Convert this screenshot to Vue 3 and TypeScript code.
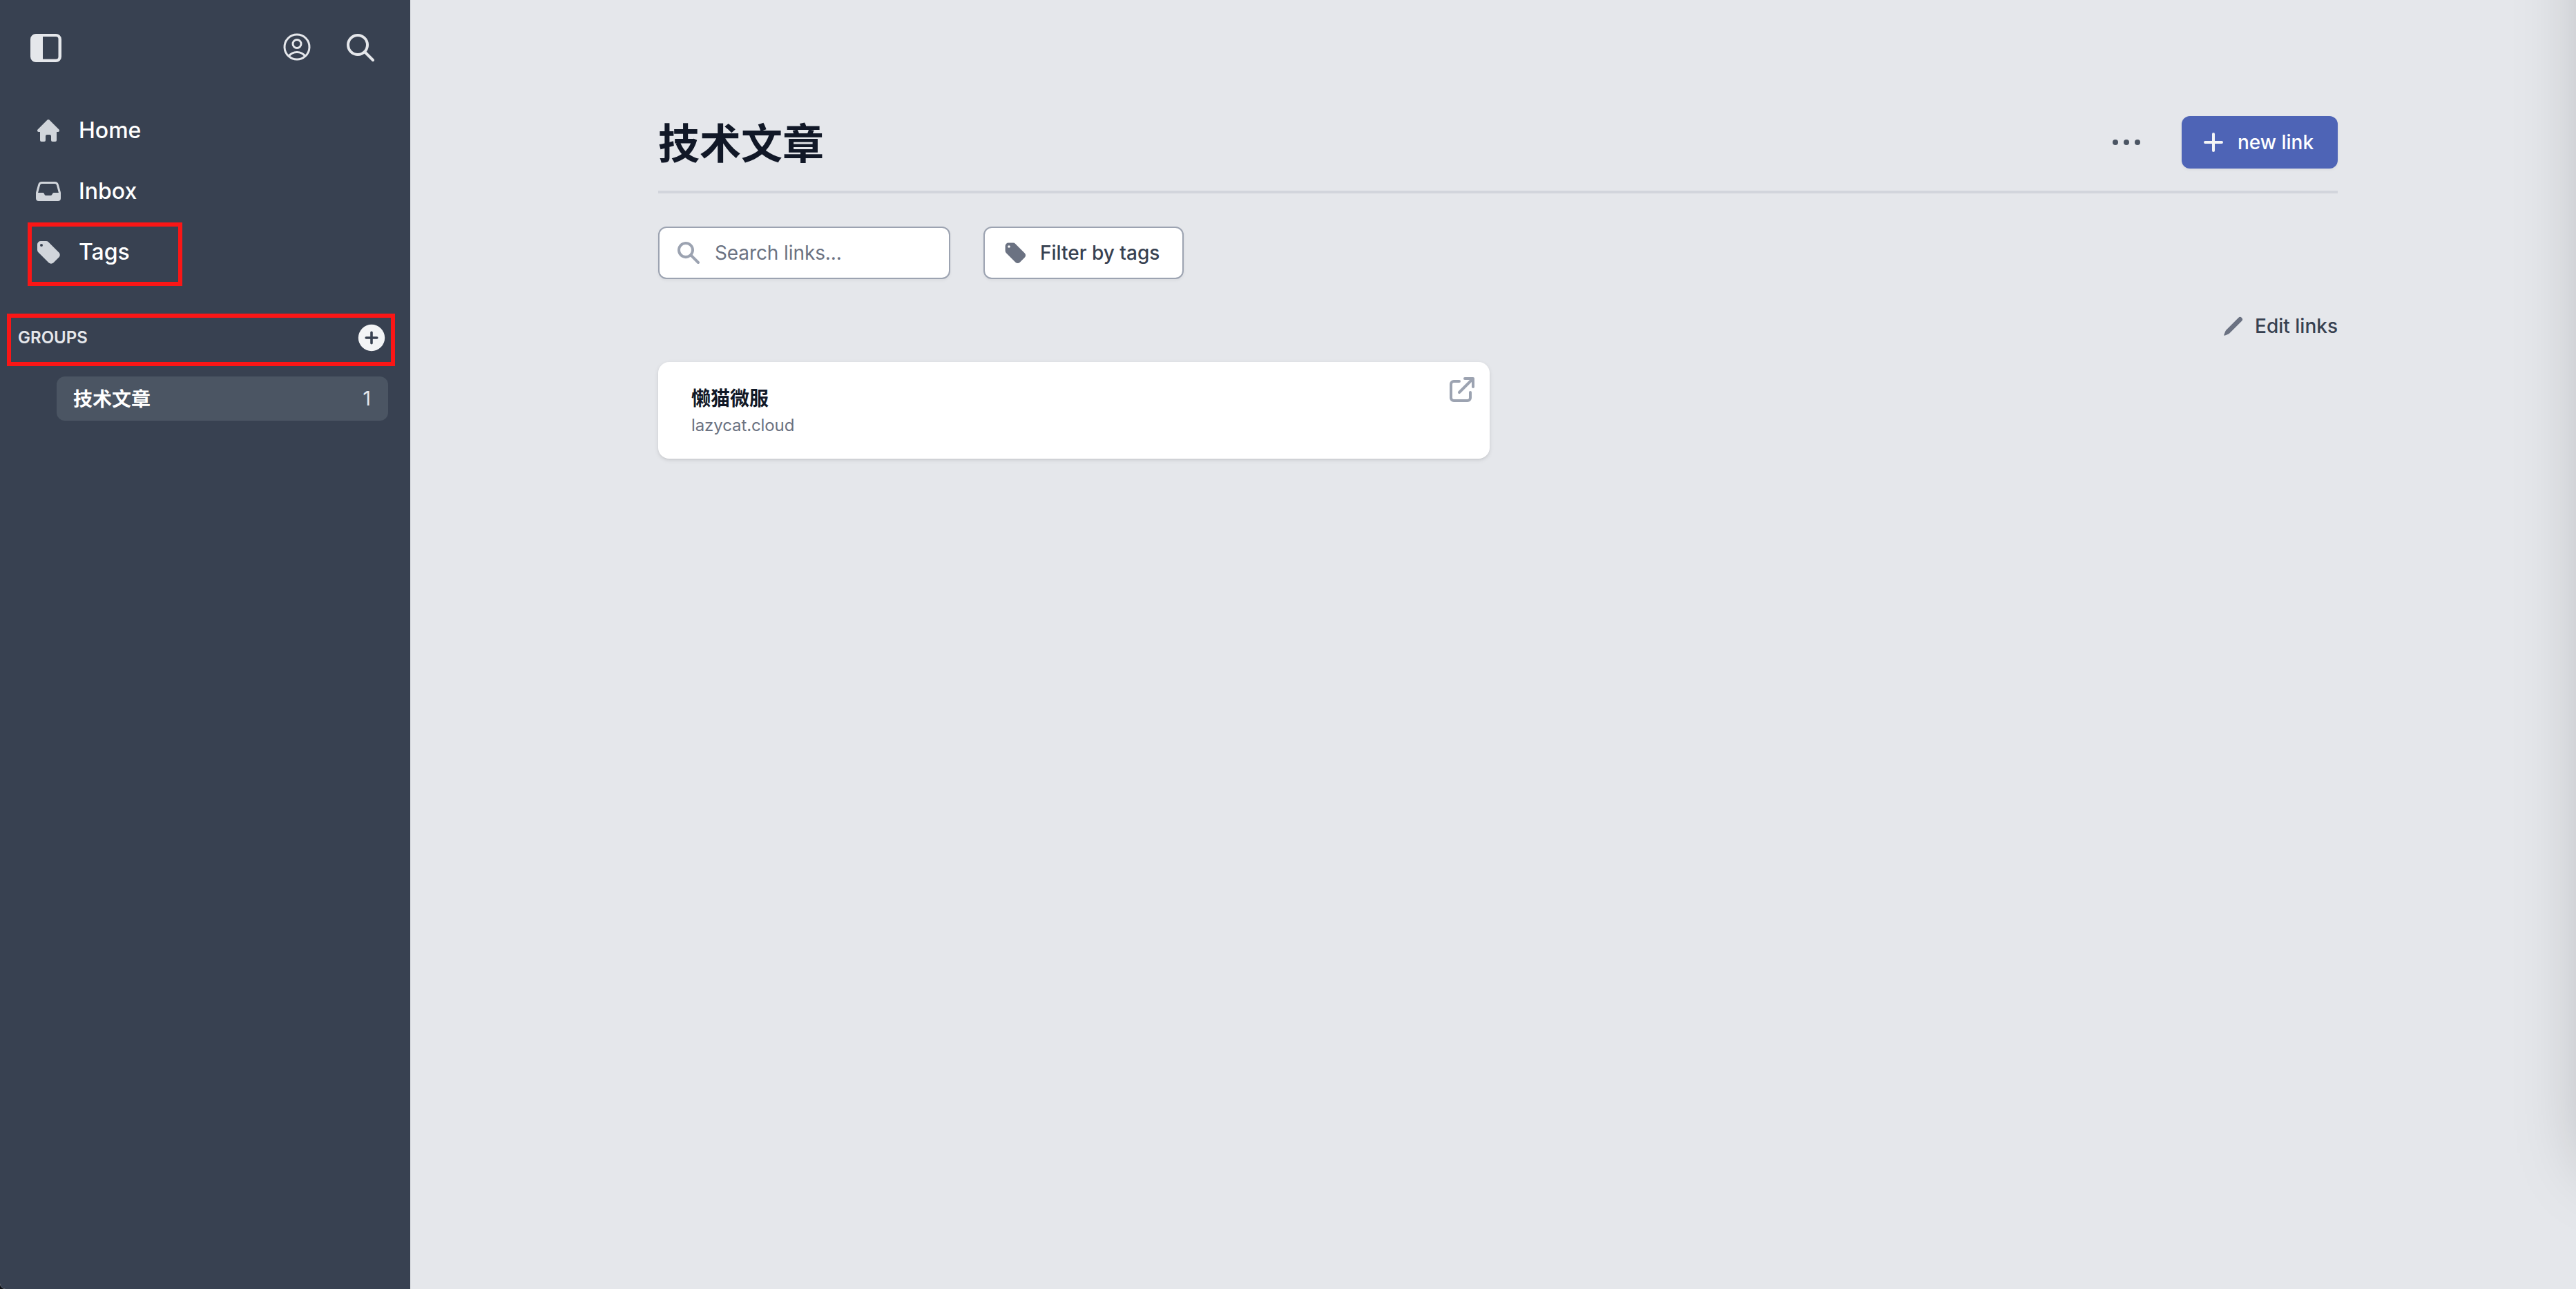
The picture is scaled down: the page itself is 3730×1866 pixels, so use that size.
<script setup lang="ts">
interface NavItem {
  label: string
  path: string
}

interface Group {
  name: string
  count: number
}

interface LinkItem {
  title: string
  host: string
}

const tagPath =
  'M4.5 2A2.5 2.5 0 002 4.5v3.879a2.5 2.5 0 00.732 1.767l7.5 7.5a2.5 2.5 0 003.536 0l3.878-3.878a2.5 2.5 0 000-3.536l-7.5-7.5A2.5 2.5 0 008.38 2H4.5zM5 6a1 1 0 100-2 1 1 0 000 2z'

const navItems: NavItem[] = [
  {
    label: 'Home',
    path: 'M9.293 2.293a1 1 0 011.414 0l7 7A1 1 0 0117 11h-1v6a1 1 0 01-1 1h-2a1 1 0 01-1-1v-3a1 1 0 00-1-1H9a1 1 0 00-1 1v3a1 1 0 01-1 1H5a1 1 0 01-1-1v-6H3a1 1 0 01-.707-1.707l7-7z',
  },
  {
    label: 'Inbox',
    path: 'M1 11.27c0-.246.033-.492.099-.73l1.523-5.521A2.75 2.75 0 015.273 3h9.454a2.75 2.75 0 012.651 2.019l1.523 5.52c.066.239.099.485.099.732V15a2 2 0 01-2 2H3a2 2 0 01-2-2v-3.73zm3.068-5.852A1.25 1.25 0 015.273 4.5h9.454a1.25 1.25 0 011.205.918l1.523 5.52c.006.02.01.041.015.062H14a1 1 0 00-.86.49l-.606 1.02a1 1 0 01-.86.49H8.236a1 1 0 01-.894-.553l-.448-.894A1 1 0 006 11H2.53l.015-.062 1.523-5.52z',
  },
  { label: 'Tags', path: tagPath },
]

const groups: Group[] = [{ name: '技术文章', count: 1 }]

const links: LinkItem[] = [{ title: '懒猫微服', host: 'lazycat.cloud' }]
</script>

<template>
  <div class="app">
    <aside class="sidebar">
      <header class="side-head">
        <svg class="toggle" viewBox="0 0 45 41">
          <path
            fill="currentColor"
            fill-rule="evenodd"
            d="M8 0H37a8 8 0 018 8V33a8 8 0 01-8 8H8a8 8 0 01-8-8V8a8 8 0 018-8zM18 4V36.500H37a3.500 3.500 0 003.500-3.500V7.500a3.500 3.500 0 00-3.500-3.500z"
          />
        </svg>
        <div class="side-actions">
          <svg class="icon-48 line thin" viewBox="0 0 24 24">
            <path
              d="M17.982 18.725A7.488 7.488 0 0012 15.75a7.488 7.488 0 00-5.982 2.975m11.963 0a9 9 0 10-11.963 0m11.963 0A8.966 8.966 0 0112 21a8.966 8.966 0 01-5.982-2.275M15 9.75a3 3 0 11-6 0 3 3 0 016 0z"
            />
          </svg>
          <svg class="icon-48 line" viewBox="0 0 24 24">
            <path d="M21 21l-6-6m2-5a7 7 0 11-14 0 7 7 0 0114 0z" />
          </svg>
        </div>
      </header>

      <nav class="nav">
        <a v-for="item in navItems" :key="item.label" class="nav-item">
          <svg class="icon-40 solid" viewBox="0 0 20 20"><path :d="item.path" /></svg>
          <span>{{ item.label }}</span>
        </a>
      </nav>

      <div class="groups-head">
        <span>GROUPS</span>
        <svg class="icon-48 solid" viewBox="0 0 20 20">
          <path
            d="M10 18a8 8 0 100-16 8 8 0 000 16zm.75-11.25a.75.75 0 00-1.5 0v2.5h-2.5a.75.75 0 000 1.5h2.5v2.5a.75.75 0 001.5 0v-2.5h2.5a.75.75 0 000-1.5h-2.500v-2.5z"
          />
        </svg>
      </div>
      <ul class="groups">
        <li v-for="group in groups" :key="group.name" class="group">
          <span class="group-name">{{ group.name }}</span>
          <span class="group-count">{{ group.count }}</span>
        </li>
      </ul>

      <div class="mark mark-tags"></div>
      <div class="mark mark-groups"></div>
    </aside>

    <main class="main">
      <header class="page-head">
        <h1>技术文章</h1>
        <div class="page-actions">
          <svg class="dots" viewBox="0 0 40 8">
            <circle cx="4" cy="4" r="4" />
            <circle cx="20" cy="4" r="4" />
            <circle cx="36" cy="4" r="4" />
          </svg>
          <button class="primary">
            <svg class="icon-40 solid" viewBox="0 0 20 20">
              <path
                d="M10 3a1 1 0 011 1v5h5a1 1 0 110 2h-5v5a1 1 0 11-2 0v-5H4a1 1 0 110-2h5V4a1 1 0 011-1z"
              />
            </svg>
            <span>new link</span>
          </button>
        </div>
      </header>

      <div class="toolbar">
        <label class="search">
          <svg class="icon-40 solid" viewBox="0 0 20 20">
            <path
              d="M8 4a4 4 0 100 8 4 4 0 000-8zM2 8a6 6 0 1110.89 3.476l4.817 4.817a1 1 0 01-1.414 1.414l-4.816-4.816A6 6 0 012 8z"
            />
          </svg>
          <span>Search links...</span>
        </label>
        <button class="filter">
          <svg class="icon-36 solid" viewBox="0 0 20 20"><path :d="tagPath" /></svg>
          <span>Filter by tags</span>
        </button>
      </div>

      <div class="edit-row">
        <svg class="icon-32 solid" viewBox="0 0 20 20">
          <path
            d="M2.695 14.763l-1.262 3.154a.5.5 0 00.65.65l3.155-1.262a4 4 0 001.343-.885L17.5 5.5a2.121 2.121 0 00-3-3L3.58 13.42a4 4 0 00-.885 1.343z"
          />
        </svg>
        <span>Edit links</span>
      </div>

      <section class="cards">
        <article v-for="link in links" :key="link.host" class="card">
          <div class="card-body">
            <h2>{{ link.title }}</h2>
            <p>{{ link.host }}</p>
          </div>
          <svg class="icon-48 line open" viewBox="0 0 24 24">
            <path
              d="M10 6H6a2 2 0 00-2 2v10a2 2 0 002 2h10a2 2 0 002-2v-4M14 4h6m0 0v6m0-6L10 14"
            />
          </svg>
        </article>
      </section>
    </main>

    <div class="drawer"></div>
  </div>
</template>

<style>
body {
  margin: 0;
  background: #0b0d12;
}
</style>

<style scoped>
.app {
  position: relative;
  display: flex;
  width: 3730px;
  height: 1866px;
  overflow: hidden;
  box-sizing: border-box;
  border-bottom-left-radius: 8px;
  background: #e5e7eb;
  font-family: Inter, 'Noto Sans CJK SC', sans-serif;
  color: #111827;
}
.app *,
.app *::before {
  box-sizing: border-box;
}
svg {
  display: block;
  flex: none;
}
.icon-48 { width: 48px; height: 48px; }
.icon-40 { width: 40px; height: 40px; }
.icon-36 { width: 36px; height: 36px; }
.icon-32 { width: 32px; height: 32px; }
.solid {
  fill: currentColor;
  fill-rule: evenodd;
}
.line {
  fill: none;
  stroke: currentColor;
  stroke-width: 2;
  stroke-linecap: round;
  stroke-linejoin: round;
}
.thin {
  stroke-width: 1.5;
}

.sidebar {
  position: relative;
  flex: none;
  width: 594px;
  background: #384151;
  color: #fff;
}
.side-head {
  display: flex;
  align-items: flex-start;
  justify-content: space-between;
  height: 145px;
  padding: 44px 48px 0 44px;
  color: #e5e7eb;
}
.toggle {
  width: 45px;
  height: 41px;
  margin-top: 5px;
}
.side-actions {
  display: flex;
  gap: 44px;
}
.side-actions svg:last-child {
  margin-top: 1px;
}
.nav-item {
  display: flex;
  align-items: center;
  gap: 24px;
  height: 88px;
  padding-left: 50px;
  font-size: 32px;
  font-weight: 500;
  line-height: 48px;
}
.nav-item svg {
  color: #d1d5db;
}
.groups-head {
  display: flex;
  align-items: center;
  justify-content: space-between;
  height: 48px;
  margin-top: 56px;
  padding: 0 32px 0 26px;
  font-size: 24px;
  font-weight: 600;
  line-height: 32px;
  color: #e5e7eb;
}
.groups-head svg {
  color: #f3f4f6;
}
.groups {
  margin: 32px 32px 0 82px;
  padding: 0;
  list-style: none;
}
.group {
  display: flex;
  align-items: center;
  justify-content: space-between;
  height: 64px;
  padding: 0 25px 0 24px;
  border-radius: 12px;
  background: #4b5563;
  font-size: 28px;
  line-height: 40px;
}
.group-name {
  padding-top: 2px;
  font-weight: 600;
}
.group-count {
  color: #e5e7eb;
}
.mark {
  position: absolute;
  border: 6px solid #fa1616;
}
.mark-tags {
  left: 40px;
  top: 322px;
  width: 224px;
  height: 92px;
}
.mark-groups {
  left: 10px;
  top: 454px;
  width: 562px;
  height: 76px;
}

.main {
  flex: 1;
  padding: 168px 345px 0 359px;
}
.page-head {
  display: flex;
  align-items: center;
  justify-content: space-between;
  height: 112px;
  padding-bottom: 32px;
  border-bottom: 4px solid #d2d5dc;
}
h1 {
  margin: 0;
  padding-top: 3px;
  font-size: 60px;
  font-weight: 700;
  line-height: 76px;
}
.page-actions {
  display: flex;
  align-items: center;
  gap: 60px;
}
.dots {
  width: 40px;
  height: 8px;
  fill: #4b5563;
}
button {
  display: flex;
  align-items: center;
  margin: 0;
  font-family: inherit;
  font-size: 28px;
  font-weight: 500;
  line-height: 40px;
  white-space: nowrap;
}
.primary {
  width: 226px;
  height: 76px;
  padding: 0 0 0 26px;
  gap: 15px;
  border: 0;
  border-radius: 12px;
  background: #4e64b6;
  color: #fff;
  font-weight: 550;
  box-shadow: 0 2px 4px rgba(0, 0, 0, 0.05);
}
.primary svg {
  color: #f3f4f6;
}
.toolbar {
  display: flex;
  gap: 48px;
  margin-top: 48px;
}
.search,
.filter {
  display: flex;
  align-items: center;
  height: 76px;
  border: 2px solid #9ca3b1;
  border-radius: 12px;
  background: #fff;
  box-shadow: 0 2px 4px rgba(0, 0, 0, 0.05);
}
.search {
  width: 423px;
  padding-left: 22px;
  gap: 18px;
  font-size: 28px;
  line-height: 40px;
  letter-spacing: -0.1px;
  color: #6b7282;
}
.search svg {
  color: #9ca3b1;
}
.filter {
  width: 290px;
  padding: 0 0 0 26px;
  gap: 18px;
  color: #374151;
}
.filter svg {
  color: #6b7282;
}
.edit-row {
  display: flex;
  align-items: center;
  justify-content: flex-end;
  gap: 15px;
  height: 40px;
  margin: 48px 0 32px;
  font-size: 28px;
  font-weight: 500;
  line-height: 40px;
  color: #374151;
}
.edit-row svg {
  color: #6b7282;
}
.cards {
  display: grid;
  grid-template-columns: 1204px 1204px;
  gap: 24px;
}
.card {
  display: flex;
  align-items: flex-start;
  justify-content: space-between;
  height: 140px;
  padding: 16px 16px 0 48px;
  border-radius: 16px;
  background: #fff;
  box-shadow:
    0 2px 6px rgba(0, 0, 0, 0.1),
    0 2px 4px -2px rgba(0, 0, 0, 0.1);
}
.card-body {
  padding-top: 17px;
}
h2 {
  margin: 0;
  font-size: 28px;
  font-weight: 600;
  line-height: 40px;
}
p {
  margin: 3px 0 0;
  font-size: 24px;
  line-height: 32px;
  letter-spacing: -0.1px;
  color: #6b7282;
}
.open {
  color: #9ca3b1;
}

/* Off-canvas drawer: only its shadow reaches into the view. */
.drawer {
  position: absolute;
  left: 100%;
  top: -400px;
  width: 600px;
  height: 2060px;
  background: #fff;
  box-shadow: 0 50px 100px -24px rgba(0, 0, 0, 0.25);
}
</style>
